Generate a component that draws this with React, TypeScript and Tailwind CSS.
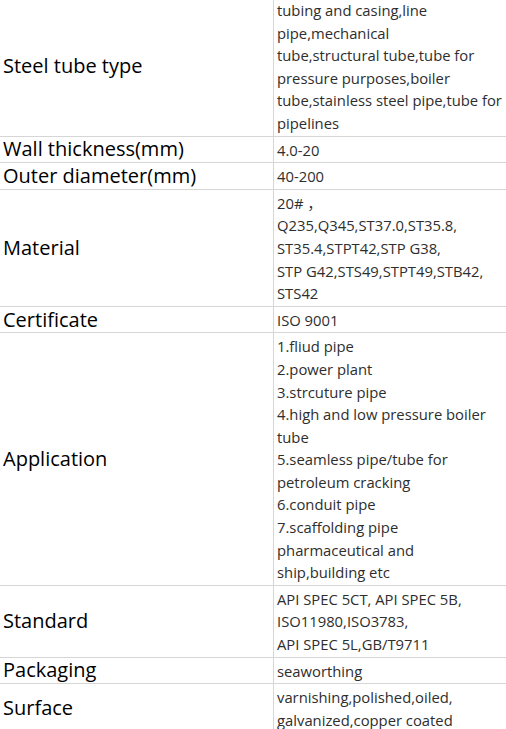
import React from "react";

type Row = {
  label: string;
  lines: string[];
};

const rows: Row[] = [
  {
    label: "Steel tube type",
    lines: [
      "tubing and casing,line",
      "pipe,mechanical",
      "tube,structural tube,tube for",
      "pressure purposes,boiler",
      "tube,stainless steel pipe,tube for",
      "pipelines",
    ],
  },
  { label: "Wall thickness(mm)", lines: ["4.0-20"] },
  { label: "Outer diameter(mm)", lines: ["40-200"] },
  {
    label: "Material",
    lines: [
      "20# ，",
      "Q235,Q345,ST37.0,ST35.8,",
      "ST35.4,STPT42,STP G38,",
      "STP G42,STS49,STPT49,STB42,",
      "STS42",
    ],
  },
  { label: "Certificate", lines: ["ISO 9001"] },
  {
    label: "Application",
    lines: [
      "1.fliud pipe",
      "2.power plant",
      "3.strcuture pipe",
      "4.high and low pressure boiler",
      "tube",
      "5.seamless pipe/tube for",
      "petroleum cracking",
      "6.conduit pipe",
      "7.scaffolding pipe",
      "pharmaceutical and",
      "ship,building etc",
    ],
  },
  {
    label: "Standard",
    lines: ["API SPEC 5CT, API SPEC 5B,", "ISO11980,ISO3783,", "API SPEC 5L,GB/T9711"],
  },
  { label: "Packaging", lines: ["seaworthing"] },
  {
    label: "Surface",
    lines: ["varnishing,polished,oiled,", "galvanized,copper coated"],
  },
];

export default function App() {
  return (
    <div
      className="w-[506px] h-[729px] overflow-hidden bg-white"
      style={{ fontFamily: '"Open Sans", "Noto Sans CJK KR", sans-serif' }}
    >
      <div className="-mt-[3px]">
        {rows.map((row) => (
          <div key={row.label} className="flex border-b border-[#d6d6d6]">
            <div className="w-[274px] shrink-0 flex items-center pl-[3px] border-r border-[#d6d6d6] text-[20px] leading-[22px] font-medium text-black">
              {row.label}
            </div>
            <div className="flex-1 pl-[3px] pt-[2px] pb-[1px] text-[14.8px] leading-[22.6px] text-[#2e2e2e]">
              {row.lines.map((line, i) => (
                <div key={i} className="whitespace-nowrap">
                  {line}
                </div>
              ))}
            </div>
          </div>
        ))}
      </div>
    </div>
  );
}
